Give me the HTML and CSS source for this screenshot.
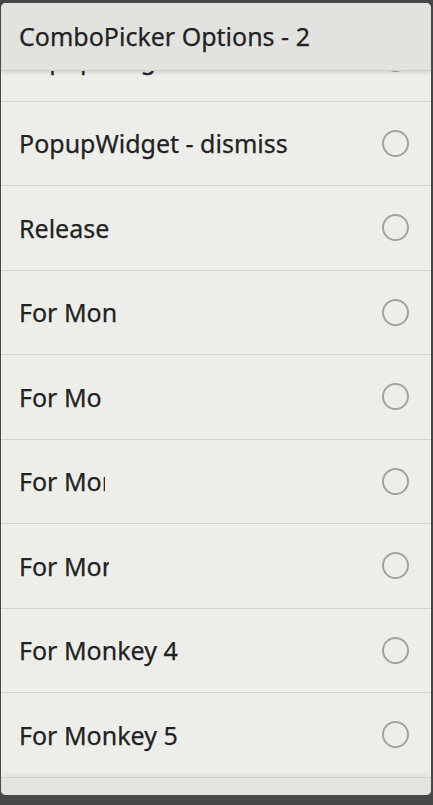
FILE: index.html
```html
<!DOCTYPE html>
<html>
<head>
<meta charset="utf-8">
<link rel="stylesheet" href="styles.css">
</head>
<body>
<div class="dialog">
  <div class="header">ComboPicker Options - 2</div>
  <div class="list">
    <div class="row first"><span class="label">PopupWidget - show</span><span class="radio"></span></div>
    <div class="row"><span class="label">PopupWidget - dismiss</span><span class="radio"></span></div>
    <div class="row"><span class="label">Release</span><span class="radio"></span></div>
    <div class="row"><span class="label clip c1">For Monkey 0</span><span class="radio"></span></div>
    <div class="row"><span class="label clip c2">For Monkey 1</span><span class="radio"></span></div>
    <div class="row"><span class="label clip c3">For Monkey 2</span><span class="radio"></span></div>
    <div class="row"><span class="label clip c4">For Monkey 3</span><span class="radio"></span></div>
    <div class="row"><span class="label">For Monkey 4</span><span class="radio"></span></div>
    <div class="row"><span class="label">For Monkey 5</span><span class="radio"></span></div>
  </div>
  <div class="footer"></div>
</div>
</body>
</html>
```
FILE: styles.css
```css
html, body {
  margin: 0;
  padding: 0;
  background: #474747;
  height: 805px;
  overflow: hidden;
}
body {
  padding: 3px 2px 0 1px;
  box-sizing: border-box;
  font-family: "Noto Sans", "Open Sans", sans-serif;
  color: #222222;
}
.dialog {
  width: 430px;
  height: 792px;
  background: #edede9;
  border-radius: 5px;
  overflow: hidden;
  display: flex;
  flex-direction: column;
}
.header {
  height: 68px;
  flex: none;
  background: #e2e2de;
  box-sizing: border-box;
  padding: 0 0 2px 18px;
  display: flex;
  align-items: center;
  font-size: 25px;
  color: #222222;
  -webkit-text-stroke: 0.25px #222222;
  position: relative;
  z-index: 2;
  border-bottom: 1px solid #cfcfcb;
  box-shadow: 0 2px 3px rgba(0,0,0,0.10);
}
.list {
  flex: 1;
  overflow: hidden;
  display: flex;
  flex-direction: column;
}
.row {
  flex: none;
  height: 84.5px;
  box-sizing: border-box;
  border-bottom: 1px solid #d3d3cf;
  display: flex;
  align-items: center;
  justify-content: space-between;
  padding: 0 22px 0 18px;
}
.row.first {
  margin-top: -54px;
}
.label {
  font-size: 25px;
  white-space: nowrap;
  overflow: hidden;
  -webkit-text-stroke: 0.25px #222222;
}
.c1 { width: 97px; }
.c2 { width: 84px; }
.c3 { width: 86px; }
.c4 { width: 90px; }
.radio {
  width: 23px;
  height: 23px;
  border: 2px solid #a2a2a0;
  border-radius: 50%;
  flex: none;
}
.footer {
  height: 17px;
  flex: none;
  background: #e3e3df;
  border-top: 1px solid #d0d0cc;
  box-shadow: 0 -3px 4px rgba(0,0,0,0.05);
}
```
